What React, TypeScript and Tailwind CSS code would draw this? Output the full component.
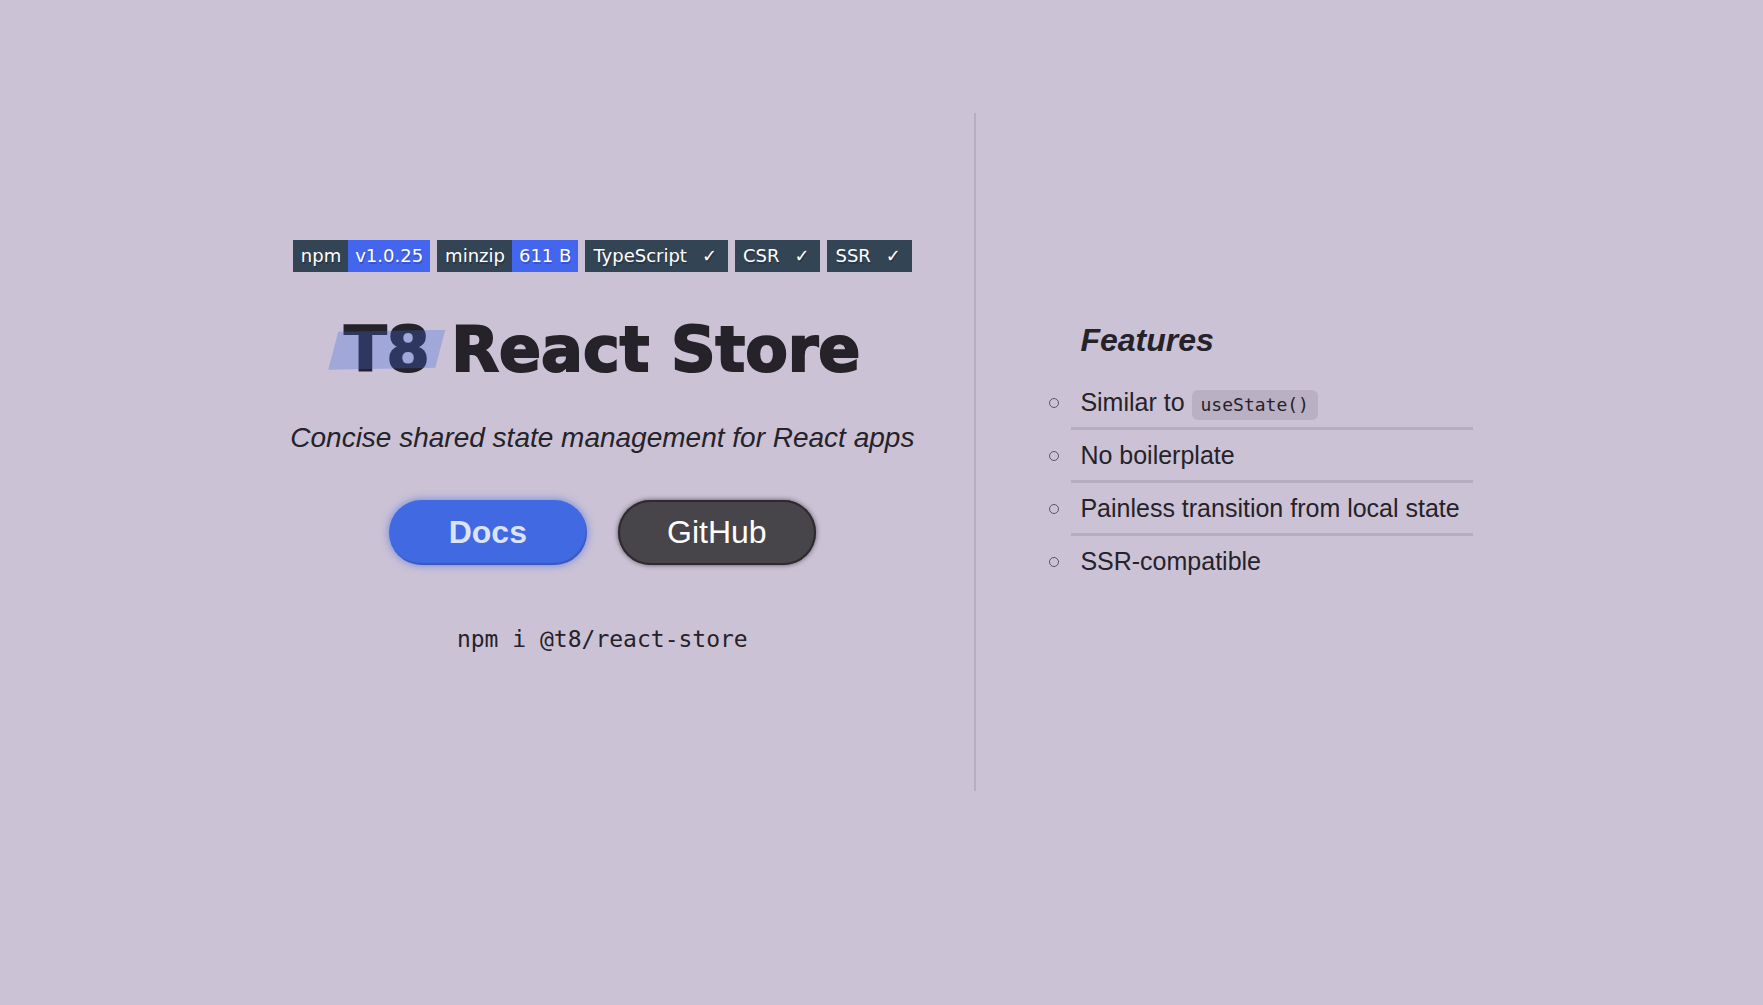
import React from "react";

type BadgeProps = { label: string; value?: string };

function Badge({ label, value }: BadgeProps) {
  return (
    <a
      href="#"
      className="flex h-8 bg-[#334455] font-['DejaVu_Sans',Verdana,sans-serif] text-[18px] leading-8 text-white [text-shadow:1px_2px_0_rgba(1,1,1,0.2)]"
    >
      <span className="pl-2 pr-[7px]">{label}</span>
      {value ? (
        <span className="bg-[#4466ee] px-[7px]">{value}</span>
      ) : (
        <span className="w-[34px] pl-2">✓</span>
      )}
    </a>
  );
}

const features: React.ReactNode[] = [
  <>
    Similar to{" "}
    <code className="inline-block rounded-md bg-[#b9b0c3] px-[9px] font-['DejaVu_Sans_Mono',monospace] text-[18px] leading-[30px]">
      useState()
    </code>
  </>,
  "No boilerplate",
  "Painless transition from local state",
  "SSR-compatible",
];

export default function App() {
  return (
    <div className="min-h-screen bg-[#cbc2d5] font-['Liberation_Sans',Arial,sans-serif] text-[#252229]">
      <main className="flex min-h-[90vh] items-center justify-center">
        <section className="flex flex-col items-center pb-2 pr-15">
          <div className="flex gap-[7px]">
            <Badge label="npm" value="v1.0.25" />
            <Badge label="minzip" value="611 B" />
            <Badge label="TypeScript" />
            <Badge label="CSR" />
            <Badge label="SSR" />
          </div>
          <h1 className="mt-10 whitespace-nowrap font-['DejaVu_Sans',sans-serif] text-[62px] font-bold leading-[76px] [-webkit-text-stroke:2px_#252229]">
            <span className="relative inline-block">
              T8
              <span className="absolute -left-4 top-[18px] h-10 w-[117px] bg-[#4169e1]/30 [clip-path:polygon(8.5%_5%,100%_0,91.5%_95%,0_100%)]" />
            </span>{" "}
            React Store
          </h1>
          <p className="mt-8 whitespace-nowrap text-[28px] italic leading-9">
            Concise shared state management for React apps
          </p>
          <div className="mt-11 flex gap-[31px] text-[32px] leading-[65px]">
            <a
              href="#docs"
              className="h-[65px] w-[198px] rounded-full bg-[#4169e1] text-center font-bold text-[#dbe3fb] shadow-[inset_-1px_-2px_1px_rgba(0,0,0,0.15),0_0_8px_rgba(65,105,225,0.7)]"
            >
              Docs
            </a>
            <a
              href="#github"
              className="h-[65px] w-[198px] rounded-full bg-[#47444a] text-center text-white shadow-[inset_0_0_0_2px_#2d2a30,0_0_5px_rgba(37,34,41,0.7)]"
            >
              GitHub
            </a>
          </div>
          <p className="mt-14 font-['DejaVu_Sans_Mono',monospace] text-[23px] leading-9">
            npm i @t8/react-store
          </p>
        </section>
        <section className="flex min-h-[67.5vh] flex-col justify-center border-l-2 border-[#b6adc1] pl-[95px] pt-0.5">
          <h2 className="pl-[9px] text-[32px] font-bold italic leading-10">Features</h2>
          <ul className="mt-[17px] text-[25px] leading-[50px]">
            {features.map((feature, i) => (
              <li
                key={i}
                className="relative whitespace-nowrap border-b-[3px] border-[#b6adc1] pl-[9px] pr-[13px] last:border-b-0"
              >
                <span className="absolute -left-[22px] top-[21px] size-[10px] rounded-full border border-[#5b5662]" />
                {feature}
              </li>
            ))}
          </ul>
        </section>
      </main>
    </div>
  );
}
